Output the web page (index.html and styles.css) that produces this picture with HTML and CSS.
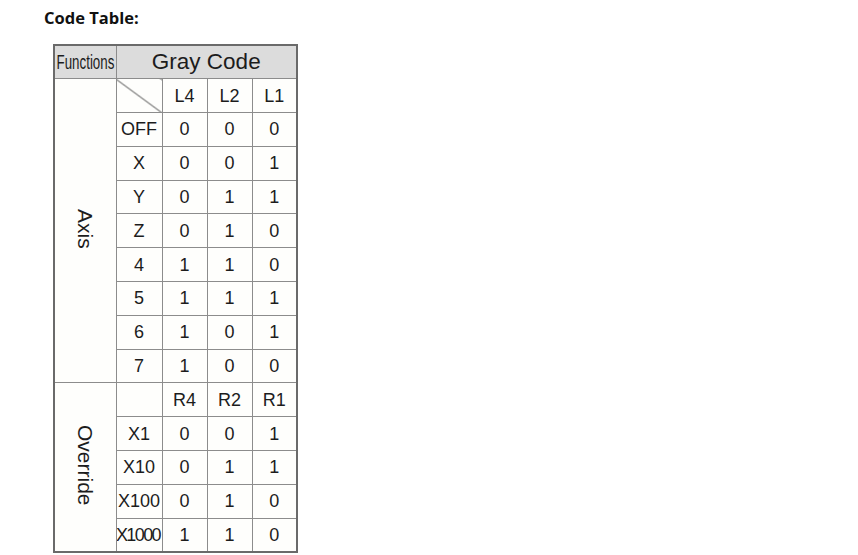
FILE: index.html
```html
<!DOCTYPE html>
<html>
<head>
<meta charset="utf-8">
<link rel="stylesheet" href="styles.css">
</head>
<body>
<h3 class="title">Code Table:</h3>
<table class="code-table">
  <colgroup>
    <col class="c-func"><col class="c-key"><col class="c-bit"><col class="c-bit"><col class="c-bit">
  </colgroup>
  <tr class="head">
    <td class="func-head"><span class="squeeze">Functions</span></td>
    <td colspan="4" class="gray-head">Gray Code</td>
  </tr>
  <tr>
    <td rowspan="9" class="group"><span class="vert">Axis</span></td>
    <td class="diag"></td><td>L4</td><td>L2</td><td>L1</td>
  </tr>
  <tr><td>OFF</td><td>0</td><td>0</td><td>0</td></tr>
  <tr><td>X</td><td>0</td><td>0</td><td>1</td></tr>
  <tr><td>Y</td><td>0</td><td>1</td><td>1</td></tr>
  <tr><td>Z</td><td>0</td><td>1</td><td>0</td></tr>
  <tr><td>4</td><td>1</td><td>1</td><td>0</td></tr>
  <tr><td>5</td><td>1</td><td>1</td><td>1</td></tr>
  <tr><td>6</td><td>1</td><td>0</td><td>1</td></tr>
  <tr><td>7</td><td>1</td><td>0</td><td>0</td></tr>
  <tr>
    <td rowspan="5" class="group"><span class="vert">Override</span></td>
    <td></td><td>R4</td><td>R2</td><td>R1</td>
  </tr>
  <tr><td>X1</td><td>0</td><td>0</td><td>1</td></tr>
  <tr><td>X10</td><td>0</td><td>1</td><td>1</td></tr>
  <tr><td>X100</td><td>0</td><td>1</td><td>0</td></tr>
  <tr><td class="tight">X1000</td><td>1</td><td>1</td><td>0</td></tr>
</table>
</body>
</html>
```

FILE: styles.css
```css
html, body {
  margin: 0;
  padding: 0;
  background: #ffffff;
}

body {
  padding: 7px 0 0 44px;
}

.title {
  margin: 0 0 16px 0;
  font-family: "Open Sans", "Liberation Sans", sans-serif;
  font-weight: 700;
  font-size: 16.5px;
  line-height: 21px;
  color: #111;
}

.code-table {
  margin-left: 9px;
  border-collapse: collapse;
  border: 2px solid #6a6a6a;
  background: #fefefc;
  font-family: "Liberation Sans", Arial, sans-serif;
  font-size: 18px;
  color: #1c1c1c;
  table-layout: fixed;
  width: 243px;
}

.c-func { width: 62px; }
.c-key { width: 46px; }
.c-bit { width: 45px; }

.code-table tr {
  height: 33.8px;
}

.code-table td {
  border: 1px solid #8c8c8c;
  padding: 0;
  text-align: center;
  vertical-align: middle;
  line-height: 20px;
  white-space: nowrap;
  overflow: hidden;
}

.head td {
  background: #dcdcdc;
}

.func-head {
  font-size: 20.5px;
}

.squeeze {
  display: inline-block;
  transform: scaleX(0.65);
  transform-origin: center;
  margin: 0 -16px;
}

.gray-head {
  font-size: 22.5px;
}

.group {
  border-left: 2px solid #6a6a6a;
}

.vert {
  display: inline-block;
  writing-mode: vertical-rl;
  font-size: 21px;
  line-height: 24px;
}

.diag {
  background: linear-gradient(to top right, transparent calc(50% - 0.8px), #444 50%, transparent calc(50% + 0.8px));
}

.tight {
  letter-spacing: -1.6px;
  text-indent: -2px;
}
```
